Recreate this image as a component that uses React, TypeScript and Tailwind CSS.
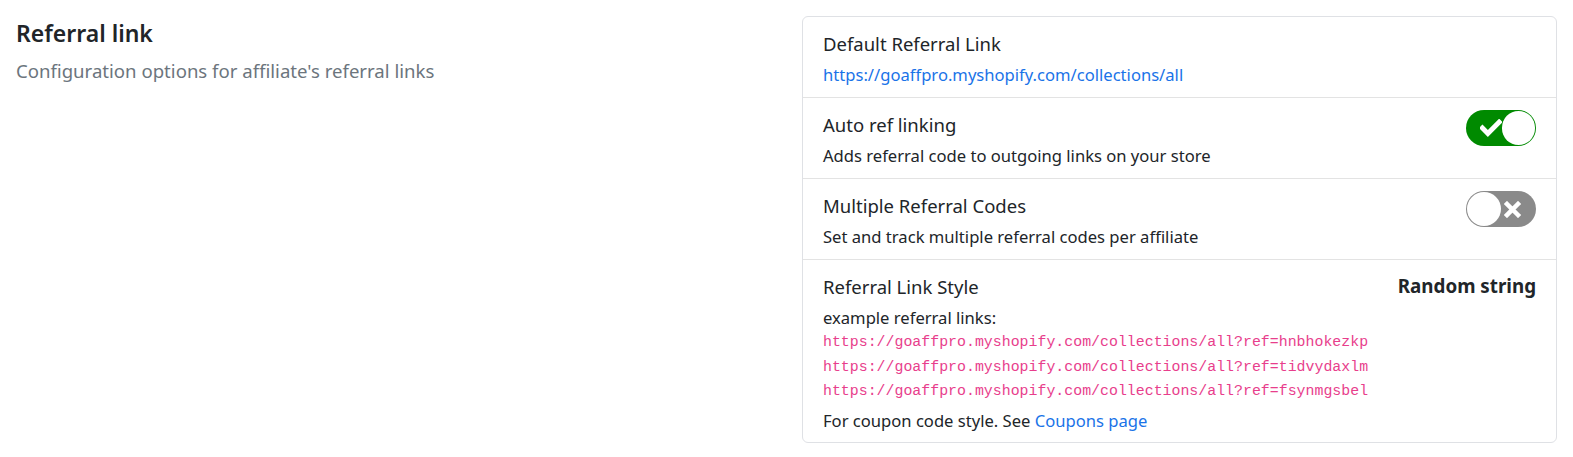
import React from 'react';

const font = { fontFamily: '"Noto Sans", "Liberation Sans", sans-serif' };

const Toggle: React.FC<{ on: boolean }> = ({ on }) =>
  on ? (
    <div className="w-[70px] h-[36px] rounded-full bg-[#008a00] flex items-center justify-between pl-[14px] pr-[1px]">
      <svg width="22" height="18" viewBox="0 0 22 18">
        <path d="M2.5 9 L8 14.5 L19.5 3" fill="none" stroke="white" strokeWidth="5" strokeLinecap="square" />
      </svg>
      <div className="w-[34px] h-[34px] rounded-full bg-white" />
    </div>
  ) : (
    <div className="w-[70px] h-[36px] rounded-full bg-[#8a8a8a] flex items-center justify-between pl-[1px] pr-[15px]">
      <div className="w-[34px] h-[34px] rounded-full bg-white" />
      <svg width="17" height="17" viewBox="0 0 17 17">
        <path d="M3 3 L14 14 M14 3 L3 14" fill="none" stroke="white" strokeWidth="4.5" strokeLinecap="square" />
      </svg>
    </div>
  );

const links = ['hnbhokezkp', 'tidvydaxlm', 'fsynmgsbel'];

export default function App() {
  return (
    <div className="bg-white w-[1573px] h-[457px] px-4 pt-4 flex text-[#212529]" style={font}>
      <div className="w-[786px] shrink-0 pt-[1px]">
        <h5 className="text-[23px] font-semibold leading-[32px]">Referral link</h5>
        <p className="text-[18.6px] text-[#6c757d] mt-[8px] leading-[28px]">Configuration options for affiliate's referral links</p>
      </div>
      <div className="w-[755px] h-[427px] border border-[#dfe1e5] rounded-[6px] flex flex-col">
        <div className="px-[20px] pt-[12px] h-[81px] border-b border-[#e3e3e3]">
          <div className="text-[18.5px] leading-[29px]">Default Referral Link</div>
          <a className="block text-[16.6px] leading-[24px] mt-[5px] text-[#1a73e8]">https://goaffpro.myshopify.com/collections/all</a>
        </div>
        <div className="px-[20px] pt-[12px] h-[81px] border-b border-[#e3e3e3] flex justify-between">
          <div>
            <div className="text-[18.5px] leading-[29px]">Auto ref linking</div>
            <div className="text-[16.6px] leading-[24px] mt-[5px]">Adds referral code to outgoing links on your store</div>
          </div>
          <div><Toggle on /></div>
        </div>
        <div className="px-[20px] pt-[12px] h-[81px] border-b border-[#e3e3e3] flex justify-between">
          <div>
            <div className="text-[18.5px] leading-[29px]">Multiple Referral Codes</div>
            <div className="text-[16.6px] leading-[24px] mt-[5px]">Set and track multiple referral codes per affiliate</div>
          </div>
          <div><Toggle on={false} /></div>
        </div>
        <div className="px-[20px] pt-[12px] flex-1 flex justify-between">
          <div>
            <div className="text-[18.5px] leading-[29px]">Referral Link Style</div>
            <div className="text-[16.6px] leading-[24px] mt-[5px]">example referral links:</div>
            {links.map((l) => (
              <div
                key={l}
                className="text-[14.9px] leading-[24.5px] text-[#e83e8c]"
                style={{ fontFamily: '"Liberation Mono", "DejaVu Sans Mono", monospace' }}
              >
                https://goaffpro.myshopify.com/collections/all?ref={l}
              </div>
            ))}
            <div className="text-[16.6px] leading-[24px] mt-[5px]">
              For coupon code style. See <a className="text-[#1a73e8]">Coupons page</a>
            </div>
          </div>
          <div className="text-[18.8px] font-bold leading-[29px]">Random string</div>
        </div>
      </div>
    </div>
  );
}
